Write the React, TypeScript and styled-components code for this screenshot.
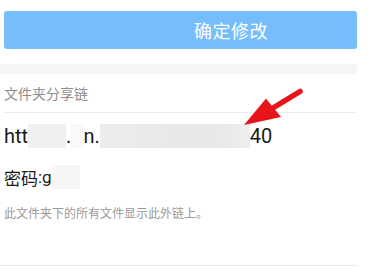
import React from 'react';
import styled, { createGlobalStyle } from 'styled-components';

const GlobalStyle = createGlobalStyle`
  body {
    margin: 0;
    background: #ffffff;
    font-family: Roboto, "Noto Sans CJK SC", sans-serif;
  }
`;

const Page = styled.div`
  position: relative;
  width: 357px;
  height: 270px;
  background: #ffffff;
`;

const ButtonArea = styled.div`
  padding: 11px 0 0 4px;
`;

const SubmitButton = styled.button`
  display: flex;
  align-items: center;
  justify-content: center;
  width: 353px;
  height: 38px;
  padding: 0 0 0 101px;
  border: none;
  border-radius: 3px;
  background: #76bdfb;
  color: #ffffff;
  font-family: "Noto Sans CJK SC", sans-serif;
  font-size: 18px;
  letter-spacing: 0.5px;
`;

const Band = styled.div`
  margin-top: 15px;
  height: 10px;
  background: #f5f5f5;
`;

const SectionTitle = styled.div`
  display: flex;
  align-items: center;
  height: 38px;
  margin-left: 4px;
  border-bottom: 1px solid #ededed;
  color: #8e8e8e;
  font-family: "Noto Sans CJK SC", sans-serif;
  font-size: 14px;
`;

const Row = styled.div<{ $height: number; $size: number }>`
  display: flex;
  align-items: center;
  height: ${(p) => p.$height}px;
  padding-left: 4px;
  color: #1a1a1a;
  font-size: ${(p) => p.$size}px;
  white-space: pre;
`;

const Label = styled.span`
  font-family: "Noto Sans CJK SC", sans-serif;
`;

const Mask = styled.span<{ $width: number; $tone: string }>`
  display: inline-block;
  width: ${(p) => p.$width}px;
  height: 24px;
  background: ${(p) => p.$tone};
  filter: blur(0.6px);
`;

const Note = styled.div`
  margin-top: 8px;
  padding-left: 4px;
  color: #9a9a9a;
  font-family: "Noto Sans CJK SC", sans-serif;
  font-size: 12px;
  line-height: 20px;
`;

const BottomLine = styled.div`
  margin-top: 42px;
  height: 1px;
  background: #e6e6e6;
`;

const Arrow = styled.svg`
  position: absolute;
  left: 0;
  top: 0;
  pointer-events: none;
`;

export default function App() {
  return (
    <Page>
      <GlobalStyle />
      <ButtonArea>
        <SubmitButton>确定修改</SubmitButton>
      </ButtonArea>
      <Band />
      <SectionTitle>文件夹分享链</SectionTitle>
      <Row $height={46} $size={20}>
        htt
        <Mask $width={38} $tone="#f0f0f0" />
        <span>.</span>
        <Mask $width={12} $tone="#f9f9f9" />
        n.
        <Mask $width={150} $tone="linear-gradient(90deg, #ededed, #e7e7e7 70%, #eeeeee)" />
        40
      </Row>
      <Row $height={36} $size={17}>
        <Label>密码</Label>:g
        <Mask $width={28} $tone="#f6f6f6" />
      </Row>
      <Note>此文件夹下的所有文件显示此外链上。</Note>
      <BottomLine />
      <Arrow width="357" height="270" viewBox="0 0 357 270">
        <line x1="300" y1="91.5" x2="268" y2="111" stroke="#e8141b" strokeWidth="5.5" strokeLinecap="round" />
        <polygon points="244,125 266,98.5 281,117" fill="#e8141b" />
      </Arrow>
    </Page>
  );
}
